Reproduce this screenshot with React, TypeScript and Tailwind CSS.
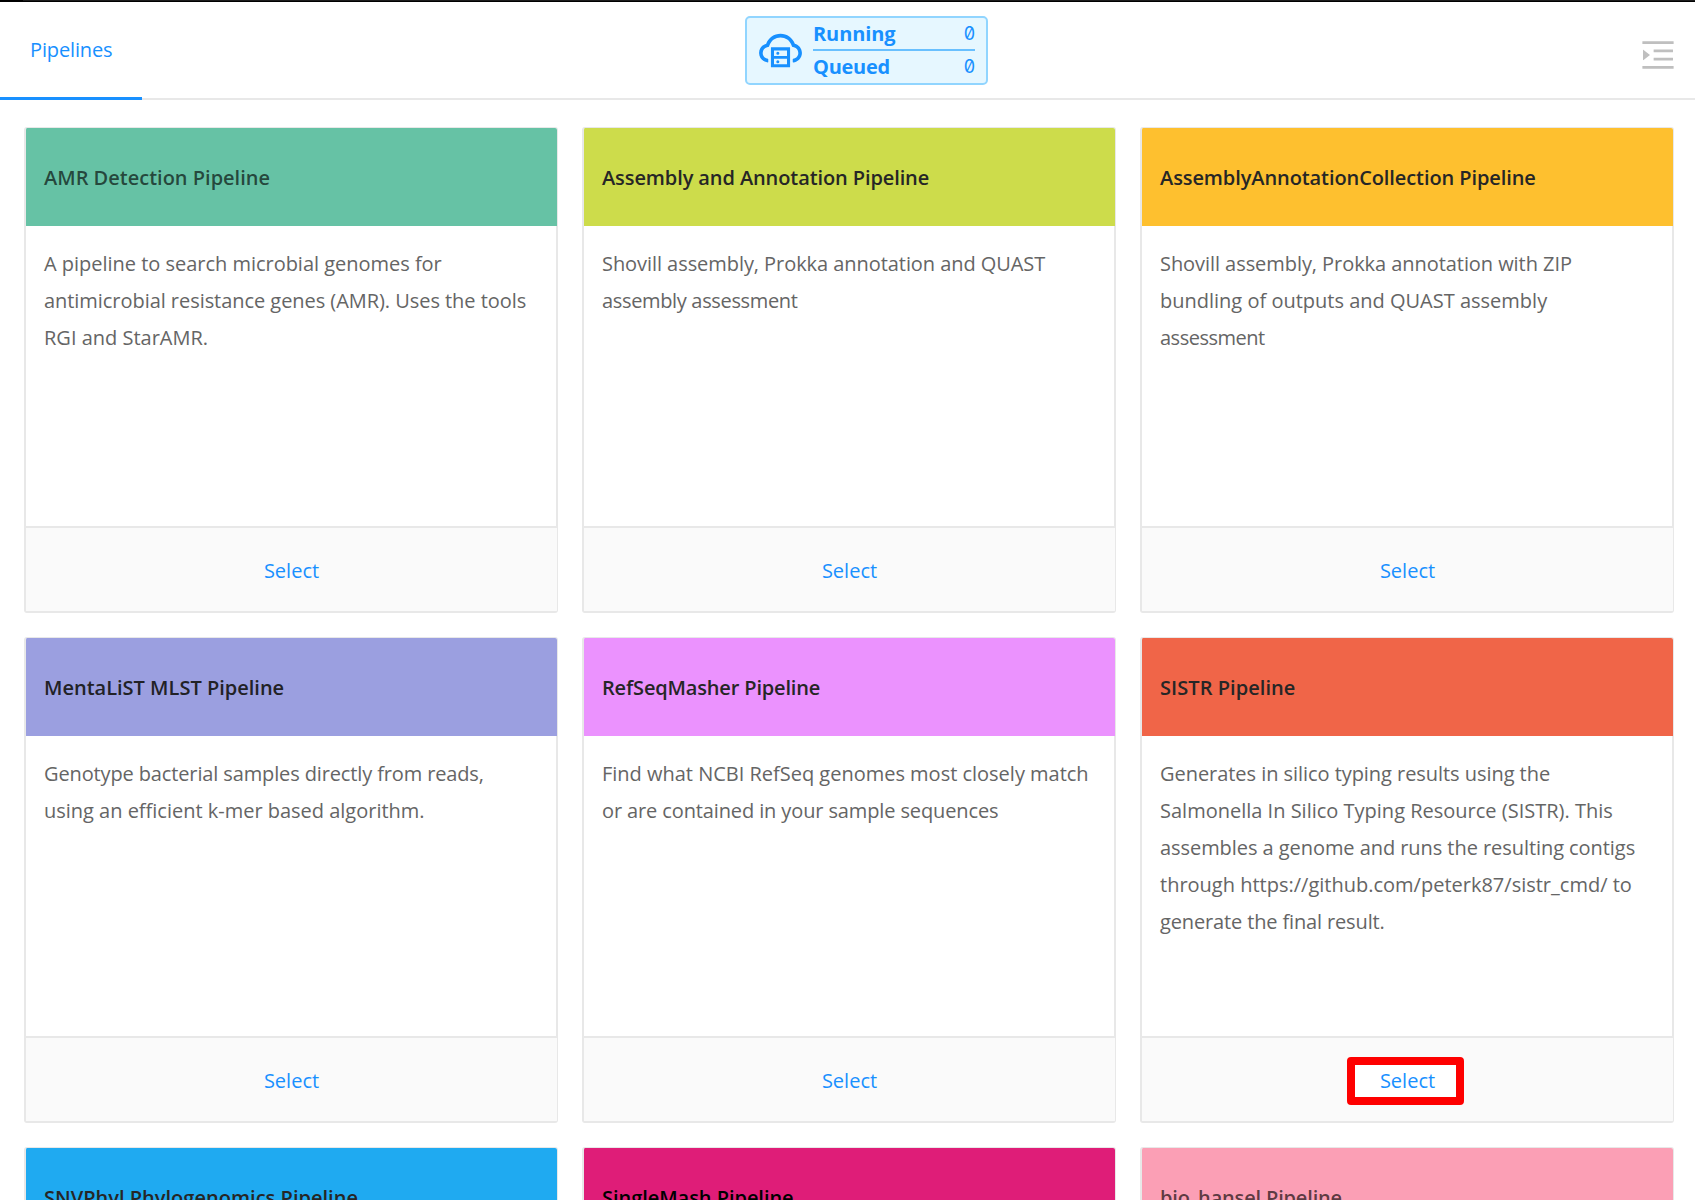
import React from "react";
import { AiOutlineCloudServer, AiOutlineMenuUnfold } from "react-icons/ai";

type Line = { text: string; tracking?: string };

type Pipeline = {
  title: string;
  titleClass: string;
  headerClass: string;
  lines?: Line[];
  highlighted?: boolean;
};

const pipelines: Pipeline[] = [
  {
    title: "AMR Detection Pipeline",
    titleClass: "text-black/65",
    headerClass: "bg-[#66c2a5]",
    lines: [
      { text: "A pipeline to search microbial genomes for", tracking: "tracking-[-0.02px]" },
      { text: "antimicrobial resistance genes (AMR). Uses the tools", tracking: "tracking-[-0.05px]" },
      { text: "RGI and StarAMR." },
    ],
  },
  {
    title: "Assembly and Annotation Pipeline",
    titleClass: "text-[#262626] tracking-[-0.1px]",
    headerClass: "bg-[#cddc4b]",
    lines: [
      { text: "Shovill assembly, Prokka annotation and QUAST", tracking: "tracking-[-0.06px]" },
      { text: "assembly assessment", tracking: "tracking-[-0.34px]" },
    ],
  },
  {
    title: "AssemblyAnnotationCollection Pipeline",
    titleClass: "text-[#262626] tracking-[-0.09px]",
    headerClass: "bg-[#fec02f]",
    lines: [
      { text: "Shovill assembly, Prokka annotation with ZIP", tracking: "tracking-[-0.06px]" },
      { text: "bundling of outputs and QUAST assembly" },
      { text: "assessment", tracking: "tracking-[-0.5px]" },
    ],
  },
  {
    title: "MentaLiST MLST Pipeline",
    titleClass: "text-[#222226]",
    headerClass: "bg-[#9b9fe0]",
    lines: [
      { text: "Genotype bacterial samples directly from reads,", tracking: "tracking-[-0.13px]" },
      { text: "using an efficient k-mer based algorithm.", tracking: "tracking-[-0.01px]" },
    ],
  },
  {
    title: "RefSeqMasher Pipeline",
    titleClass: "text-[#262626] tracking-[-0.16px]",
    headerClass: "bg-[#eb92fe]",
    lines: [
      { text: "Find what NCBI RefSeq genomes most closely match", tracking: "tracking-[-0.01px]" },
      { text: "or are contained in your sample sequences", tracking: "tracking-[-0.12px]" },
    ],
  },
  {
    title: "SISTR Pipeline",
    titleClass: "text-[#262626] tracking-[0.06px]",
    headerClass: "bg-[#f06548]",
    highlighted: true,
    lines: [
      { text: "Generates in silico typing results using the", tracking: "tracking-[-0.05px]" },
      { text: "Salmonella In Silico Typing Resource (SISTR). This" },
      { text: "assembles a genome and runs the resulting contigs", tracking: "tracking-[-0.06px]" },
      { text: "through https://github.com/peterk87/sistr_cmd/ to" },
      { text: "generate the final result.", tracking: "tracking-[-0.14px]" },
    ],
  },
  {
    title: "SNVPhyl Phylogenomics Pipeline",
    titleClass: "text-[#262626] tracking-[0.02px]",
    headerClass: "bg-[#1faaf1]",
  },
  {
    title: "SingleMash Pipeline",
    titleClass: "text-black tracking-[-0.04px]",
    headerClass: "bg-[#df1d78]",
  },
  {
    title: "bio_hansel Pipeline",
    titleClass: "text-black/65 tracking-[-0.16px]",
    headerClass: "bg-[#fb9fb5]",
  },
];

function PipelineCard({ title, titleClass, headerClass, lines, highlighted }: Pipeline) {
  return (
    <article className="flex h-[486px] flex-col overflow-hidden rounded-[3px] border-t border-r border-b-2 border-l-2 border-[#e8e8e8] bg-white">
      <header className={`flex h-[98px] shrink-0 items-center pt-[2px] pl-[18px] ${headerClass}`}>
        <h2 className={`whitespace-nowrap font-semibold ${titleClass}`}>{title}</h2>
      </header>
      {lines && (
        <>
          <div className="grow border-r border-[#e8e8e8] pt-[19px] pl-[18px] leading-[37px] text-[#656565]">
            {lines.map((line) => (
              <p key={line.text} className={`whitespace-nowrap ${line.tracking ?? ""}`}>
                {line.text}
              </p>
            ))}
          </div>
          <footer className="relative flex h-[85px] shrink-0 items-center justify-center border-t-2 border-[#e8e8e8] bg-[#fafafa] pt-[2px]">
            {highlighted && (
              <span className="absolute top-[19px] left-[205px] h-12 w-[117px] rounded border-8 border-[#fe0000] bg-white" />
            )}
            <a className="relative text-[#1890ff]">Select</a>
          </footer>
        </>
      )}
    </article>
  );
}

function QueueStatus() {
  return (
    <div className="flex h-[69px] w-[243px] items-center rounded-[5px] border-2 border-[#91d5ff] bg-[#e6f7ff] text-[#1890ff]">
      <AiOutlineCloudServer className="ml-[8.5px] size-[49px] shrink-0" />
      <dl className="ml-[8.5px] w-[162px]">
        <div className="flex h-8 items-center justify-between border-b-2 border-[#69c0ff]">
          <dt className="font-bold tracking-[-0.1px]">Running</dt>
          <dd className="pb-px font-[Inter] text-[18px] slashed-zero">0</dd>
        </div>
        <div className="flex h-8 items-center justify-between">
          <dt className="font-bold tracking-[-0.27px]">Queued</dt>
          <dd className="pb-px font-[Inter] text-[18px] slashed-zero">0</dd>
        </div>
      </dl>
    </div>
  );
}

export default function App() {
  return (
    <div className="h-[1200px] w-[1695px] overflow-hidden bg-white font-['Open_Sans',sans-serif] text-[20px]">
      <div className="flex h-px bg-[#1c1c1c]">
        <div className="w-[23px] bg-black" />
      </div>
      <div className="h-px bg-black" />
      <nav className="flex h-[98px] justify-between border-b-2 border-[#e8e8e8]">
        <div className="-mb-[2px] flex w-[142px] flex-col justify-between border-b-[3px] border-[#1890ff]">
          <a className="pt-[30px] pl-[30px] leading-[36px] tracking-[-0.14px] text-[#1890ff]">Pipelines</a>
        </div>
        <div className="ml-[603px] pt-[14px]">
          <QueueStatus />
        </div>
        <button className="mt-[33px] ml-auto mr-[17px] h-10 text-[40px] text-[#bfbfbf]">
          <AiOutlineMenuUnfold />
        </button>
      </nav>
      <main className="grid grid-cols-[534px_534px_534px] gap-6 pt-[27px] pl-6">
        {pipelines.map((p) => (
          <PipelineCard key={p.title} {...p} />
        ))}
      </main>
    </div>
  );
}
